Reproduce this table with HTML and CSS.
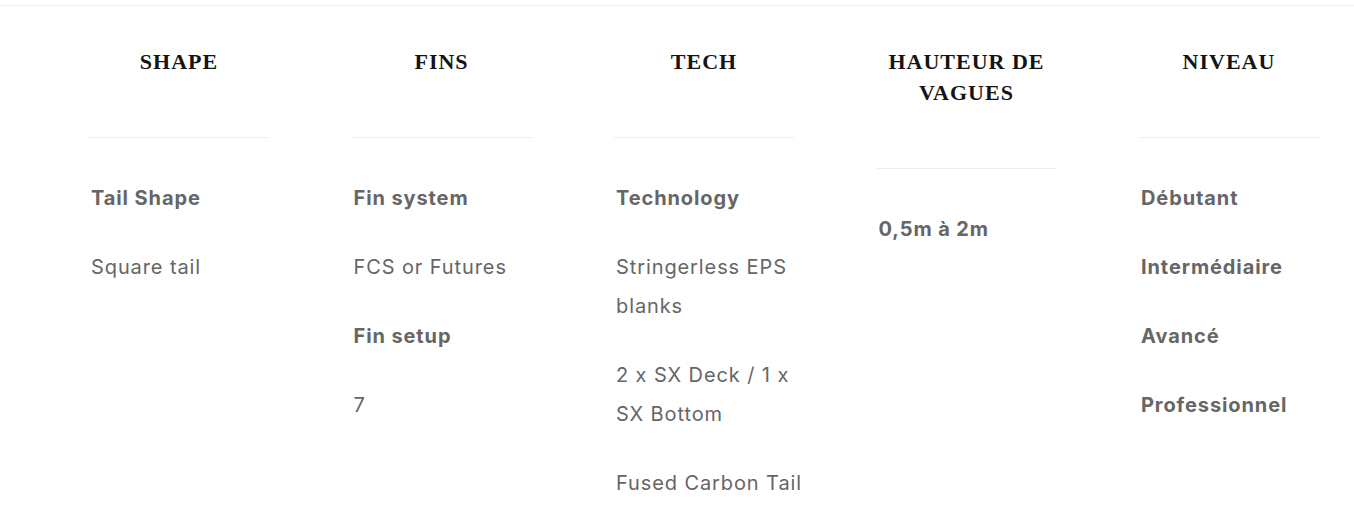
FILE: index.html
```html
<!DOCTYPE html>
<html lang="fr">
<head>
<meta charset="utf-8">
<title>Specs</title>
<link rel="stylesheet" href="styles.css">
</head>
<body>
<section class="specs">
  <div class="col">
    <h3 class="col-title">SHAPE</h3>
    <div class="col-body">
      <p class="label">Tail Shape</p>
      <p>Square tail</p>
    </div>
  </div>
  <div class="col">
    <h3 class="col-title">FINS</h3>
    <div class="col-body">
      <p class="label">Fin system</p>
      <p>FCS or Futures</p>
      <p class="label">Fin setup</p>
      <p>7</p>
    </div>
  </div>
  <div class="col">
    <h3 class="col-title">TECH</h3>
    <div class="col-body">
      <p class="label">Technology</p>
      <p>Stringerless EPS<br>blanks</p>
      <p>2 x SX Deck / 1 x<br>SX Bottom</p>
      <p>Fused Carbon Tail</p>
    </div>
  </div>
  <div class="col">
    <h3 class="col-title">HAUTEUR DE<br>VAGUES</h3>
    <div class="col-body">
      <p class="label">0,5m à 2m</p>
    </div>
  </div>
  <div class="col">
    <h3 class="col-title">NIVEAU</h3>
    <div class="col-body">
      <p class="label">Débutant</p>
      <p class="label">Intermédiaire</p>
      <p class="label">Avancé</p>
      <p class="label">Professionnel</p>
    </div>
  </div>
</section>
</body>
</html>
```
FILE: styles.css
```css
html, body {
  margin: 0;
  padding: 0;
  background: #fff;
}
body {
  padding-top: 5px;
  font-family: "Inter", "Liberation Sans", sans-serif;
  color: #666;
}
.specs {
  border-top: 1px solid #eeeeee;
  display: grid;
  grid-template-columns: repeat(5, 180px);
  column-gap: 82.5px;
  padding-left: 89px;
  align-items: start;
}
.col {
  width: 180px;
}
.col-title {
  margin: 0;
  padding: 40px 0 60px;
  border-bottom: 1px solid #eeeeee;
  text-align: center;
  font-family: "Liberation Serif", serif;
  font-weight: 700;
  font-size: 22px;
  line-height: 31px;
  letter-spacing: 1px;
  color: #141414;
}
.col-body {
  padding-top: 41px;
  padding-left: 2px;
  width: 220px;
}
.col-body p {
  margin: 0 0 30px;
  font-size: 20px;
  line-height: 39px;
  letter-spacing: 0.9px;
  white-space: nowrap;
}
.col-body .label {
  font-weight: 700;
}
```
